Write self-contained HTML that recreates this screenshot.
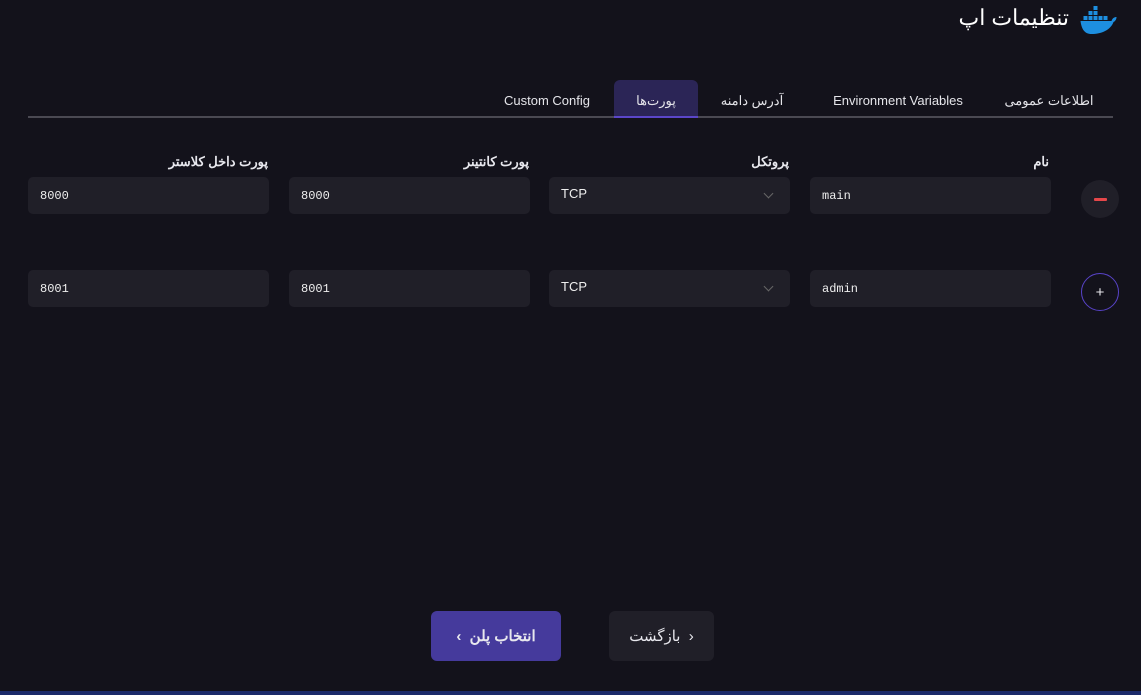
<!DOCTYPE html>
<html><head><meta charset="utf-8"><style>
*{box-sizing:border-box;margin:0;padding:0}
body{width:1141px;height:695px;background:#13121b;font-family:"Liberation Sans","Noto Sans CJK SC",sans-serif;color:#e8e8ee;position:relative;overflow:hidden}
.abs{position:absolute}
.title{right:72px;top:5px;font-size:22px;color:#fff;direction:rtl}
.tabs{left:28px;right:28px;top:116px;height:2px;background:#4a4952}
.tab{top:80px;height:37px;font-size:13px;line-height:42px;color:#e5e5ea;text-align:center}
.lbl{font-size:13px;font-weight:bold;direction:rtl;top:154px}
.inp{height:37px;width:241px;background:#201f28;border-radius:5px;font-family:"Liberation Mono",monospace;font-size:12px;line-height:39px;padding-left:12px;color:#eee}
.sel{font-family:"Liberation Sans",sans-serif;font-size:13px;line-height:34px}
.chev{position:absolute;right:18px;top:13px;width:7px;height:7px;border-right:1px solid #666;border-bottom:1px solid #666;transform:rotate(45deg)}
.circ{width:38px;height:38px;border-radius:50%;left:1081px}
.btn{top:611px;height:50px;border-radius:6px;font-size:15px;line-height:52px;text-align:center;direction:rtl}
</style></head><body>
<div class="abs title">تنظیمات اپ</div>
<svg class="abs" style="left:1079px;top:5px" width="41" height="30" viewBox="0 0 40 30">
<g fill="#1d8fe0"><rect x="14" y="1" width="4" height="4"/><rect x="9" y="6" width="4" height="4"/><rect x="14" y="6" width="4" height="4"/><rect x="4" y="11" width="4" height="4"/><rect x="9" y="11" width="4" height="4"/><rect x="14" y="11" width="4" height="4"/><rect x="19" y="11" width="4" height="4"/><rect x="24" y="11" width="4" height="4"/>
<path d="M1 16 H32 C33 13 35 12 37 12 C37 14 36 16 34 17 C31 25 22 29 12 29 C5 29 2 24 1 16Z"/></g></svg>
<div class="abs tabs"></div>
<div class="abs tab" style="left:990px;width:118px">اطلاعات عمومی</div>
<div class="abs tab" style="left:815px;width:166px">Environment Variables</div>
<div class="abs tab" style="left:700px;width:104px">آدرس دامنه</div>
<div class="abs tab" style="left:614px;width:84px;background:#2b2556;border-radius:6px 6px 0 0">پورت‌ها</div>
<div class="abs" style="left:614px;top:116px;width:84px;height:2px;background:#5b46c9"></div>
<div class="abs tab" style="left:490px;width:114px">Custom Config</div>
<div class="abs lbl" style="right:92px">نام</div>
<div class="abs lbl" style="right:352px">پروتکل</div>
<div class="abs lbl" style="right:612px">پورت کانتینر</div>
<div class="abs lbl" style="right:873px">پورت داخل کلاستر</div>
<div class="abs inp" style="left:810px;top:177px">main</div>
<div class="abs inp sel" style="left:549px;top:177px">TCP<span class="chev"></span></div>
<div class="abs inp" style="left:289px;top:177px">8000</div>
<div class="abs inp" style="left:28px;top:177px">8000</div>
<div class="abs inp" style="left:810px;top:270px">admin</div>
<div class="abs inp sel" style="left:549px;top:270px">TCP<span class="chev"></span></div>
<div class="abs inp" style="left:289px;top:270px">8001</div>
<div class="abs inp" style="left:28px;top:270px">8001</div>
<div class="abs circ" style="top:180px;background:#201f28"><div style="position:absolute;left:13px;top:18px;width:13px;height:3px;background:#e5474a;border-radius:1px"></div></div>
<div class="abs circ" style="top:273px;border:1px solid #5843c8;text-align:center;line-height:38px;font-size:15px">+</div>
<div class="abs btn" style="left:431px;width:130px;background:#453a9c;font-weight:bold">انتخاب پلن &nbsp;›</div>
<div class="abs btn" style="left:609px;width:105px;background:#201f28">‹&nbsp; بازگشت</div>
<div class="abs" style="left:0;top:691px;width:1141px;height:4px;background:#1b2a6a"></div>
</body></html>
